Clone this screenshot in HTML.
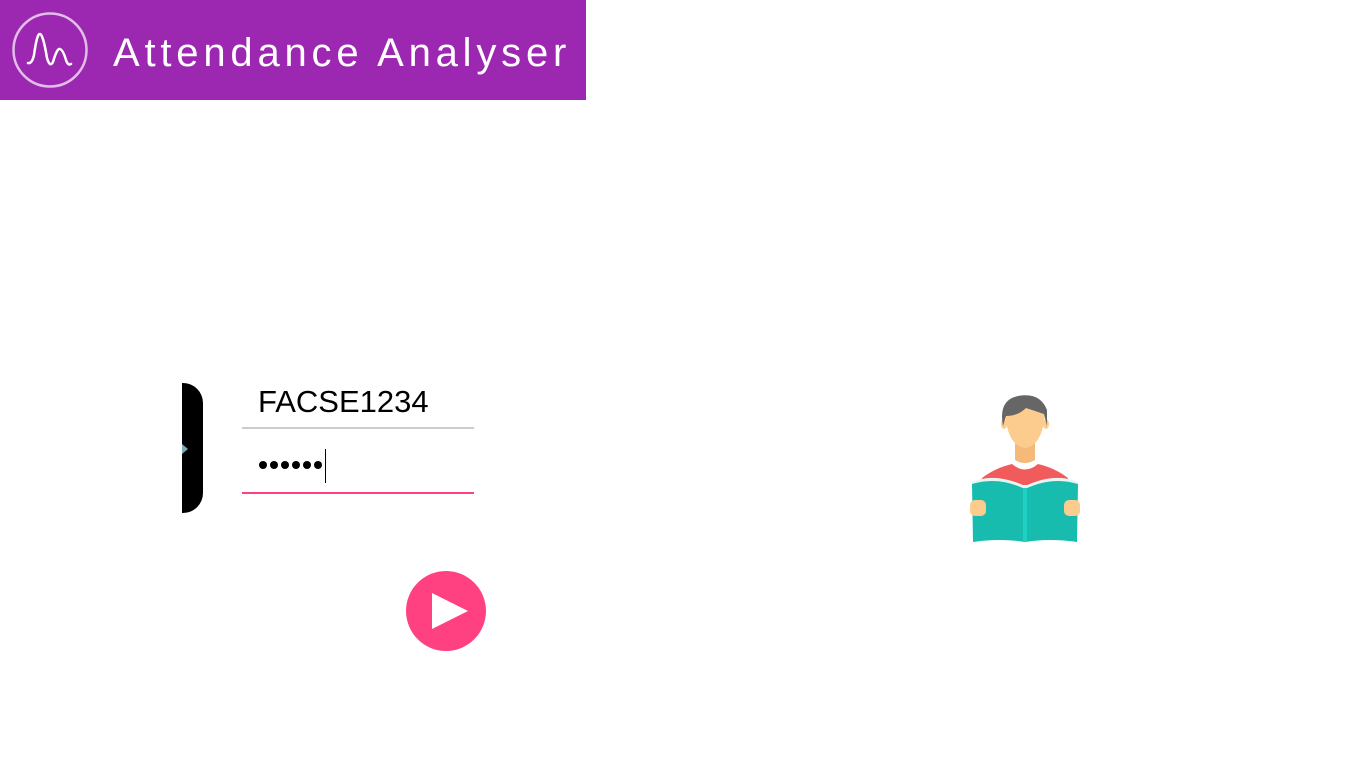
<!DOCTYPE html>
<html><head><style>
body{margin:0;width:1366px;height:768px;background:#fff;position:relative;overflow:hidden;font-family:"Liberation Sans",sans-serif}
.hdr{position:absolute;left:0;top:0;width:586px;height:100px;background:#9c27b0}
.title{position:absolute;left:113px;top:29px;font-size:40px;color:#fff;letter-spacing:4.8px;line-height:48px;white-space:nowrap}
.tab{position:absolute;left:182px;top:383px;width:21px;height:130px;background:#000;border-radius:0 20px 20px 0}
.l1{position:absolute;left:242px;top:427px;width:232px;height:2px;background:#ccc}
.l2{position:absolute;left:242px;top:492px;width:232px;height:2px;background:#ff4081}
.t1{position:absolute;left:258px;top:384px;font-size:31px;color:#000}
.d{position:absolute;top:461px;width:8px;height:8px;border-radius:50%;background:#000}
.cur{position:absolute;left:325px;top:449px;width:1px;height:34px;background:#000}
.play{position:absolute;left:406px;top:571px;width:80px;height:80px;border-radius:50%;background:#ff4081}
</style></head><body>
<div class="hdr">
<svg width="100" height="100" style="position:absolute;left:0;top:0">
<circle cx="50" cy="50" r="36.5" fill="none" stroke="#e1bee7" stroke-width="2.5"/>
<path d="M28 63 Q32 64 34 55 Q37 33 40 34 Q43 34 47 58 Q50 68 53 62 Q57 48 60 49 Q63 50 66 60 Q68 66 71 64" fill="none" stroke="#fff" stroke-width="2.5" stroke-linecap="round"/>
</svg>
<div class="title">Attendance Analyser</div>
</div>
<div class="tab"></div>
<svg width="8" height="10" style="position:absolute;left:182px;top:444px"><path d="M0 0 L6 5 L0 10Z" fill="#7fa8b8"/></svg>
<div class="t1">FACSE1234</div>
<div class="l1"></div>
<div class="d" style="left:259px"></div><div class="d" style="left:270px"></div><div class="d" style="left:281px"></div><div class="d" style="left:292px"></div><div class="d" style="left:303px"></div><div class="d" style="left:314px"></div>
<div class="cur"></div>
<div class="l2"></div>
<div class="play"><svg width="80" height="80"><path d="M26 22 L26 58 L62 40Z" fill="#fff"/></svg></div>
<svg width="130" height="160" viewBox="0 0 130 160" style="position:absolute;left:960px;top:390px">
<path d="M22 88 Q35 78 52 74 Q65 85 78 74 Q95 78 108 88 L108 95 L22 95Z" fill="#f25b5b"/>
<path d="M55 50 L55 70 Q65 76 75 70 L75 50Z" fill="#f5b97a"/>
<path d="M45 15 Q45 55 65 58 Q85 55 85 15 Z" fill="#fccc8e"/>
<ellipse cx="44" cy="34" rx="3" ry="5" fill="#fccc8e"/><ellipse cx="86" cy="34" rx="3" ry="5" fill="#fccc8e"/>
<path d="M43 36 Q38 10 58 6 Q80 2 87 20 L87 36 L84 24 Q72 20 66 18 Q58 26 46 26 Z" fill="#666"/>
<path d="M12 92 Q35 82 65 96 Q95 82 118 92 L118 98 L12 98Z" fill="#e8f4f2"/>
<path d="M12 94 Q38 86 65 99 L65 152 Q40 148 13 152 Z" fill="#17bcaf"/>
<path d="M118 94 Q92 86 65 99 L65 152 Q90 148 117 152 Z" fill="#17bcaf"/>
<rect x="63" y="98" width="4" height="54" fill="#1fd1c2"/>
<rect x="10" y="110" width="16" height="16" rx="5" fill="#fccc8e"/>
<rect x="104" y="110" width="16" height="16" rx="5" fill="#fccc8e"/>
</svg>
</body></html>
